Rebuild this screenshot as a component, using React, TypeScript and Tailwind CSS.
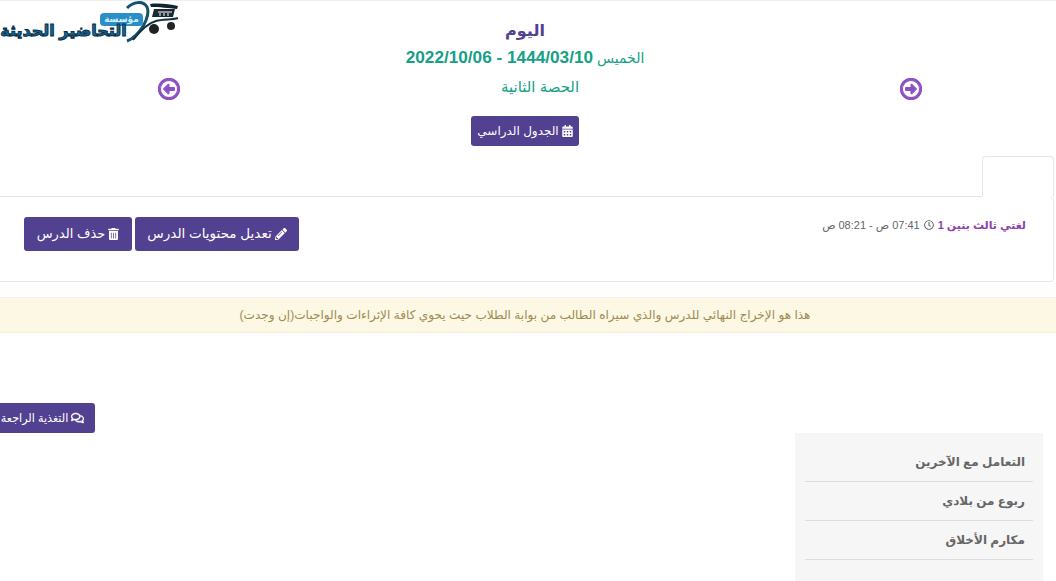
import {
  FaCalendarAlt,
  FaPencilAlt,
  FaRegArrowAltCircleLeft,
  FaRegArrowAltCircleRight,
  FaRegClock,
  FaRegComments,
  FaTrashAlt,
} from 'react-icons/fa'

const lessons = ['التعامل مع الآخرين', 'ربوع من بلادي', 'مكارم الأخلاق']

function Logo() {
  return (
    <div dir="rtl" className="absolute left-0 top-0 h-[42px] w-[180px] overflow-hidden">
      <svg viewBox="0 0 180 42" className="absolute left-0 top-0 h-[42px] w-[180px]">
        <path d="M127 7 C133 1 143 -1 147 6 C150 13 145 25 136 34 C133 37 130 39 127 40" fill="none" stroke="#14506f" strokeWidth="3" />
        <path d="M133 39 C140 30 148 22 156 20 C164 18 172 19 178 17" fill="none" stroke="#12303f" strokeWidth="2" />
        <path d="M150 3 C158 2 170 3 178 5 L177 8 C170 7 158 6 151 6 Z" fill="#10242f" />
        <path d="M154 8 H175 L173 16 H152 Z" fill="#1a2a33" />
        <path d="M158 11 H172 M160 12 V15 M164 12 V15 M168 12 V15" stroke="#ffffff" strokeWidth="1" />
        <circle cx="154" cy="28" r="5" fill="#222222" />
        <circle cx="171" cy="25" r="4" fill="#222222" />
      </svg>
      <span className="absolute left-[100px] top-[12px] flex h-[13px] w-[43px] items-center justify-center rounded-[4px] bg-[#2a8ec9] text-[9px] font-bold leading-none text-[#d7eefa]">
        مؤسسة
      </span>
      <span className="absolute left-0 top-[20px] w-[127px] whitespace-nowrap text-center text-[16px] font-bold leading-[20px] text-[#0f6a9c] [-webkit-text-stroke:1px_#0b2f45]">
        التحاضير الحديثة
      </span>
    </div>
  )
}

export default function App() {
  return (
    <div
      dir="rtl"
      className="relative h-[581px] w-[1056px] overflow-hidden border-t border-[#eeeeee] bg-white font-['Liberation_Sans','DejaVu_Sans',sans-serif] text-[#555555]"
    >
      <Logo />

      <header className="mr-[6px] flex flex-col items-center pt-[20px]">
        <h1 className="text-[16px] font-bold leading-[20px] text-[#524090]">اليوم</h1>
        <p className="mt-[6px] text-[14px] leading-[20px] text-[#16a085]">
          الخميس <b className="text-[17.2px]">1444/03/10 - 2022/10/06</b>
        </p>
      </header>

      <div className="ml-[158px] mr-[134px] mt-[9px] flex items-start justify-between">
        <FaRegArrowAltCircleRight stroke="currentColor" strokeWidth={24} className="mt-[1px] h-[22px] w-[22px] text-[#8e50c4]" />
        <span className="text-[15px] leading-[20px] text-[#16a085]">الحصة الثانية</span>
        <FaRegArrowAltCircleLeft stroke="currentColor" strokeWidth={24} className="mt-[1px] h-[22px] w-[22px] text-[#8e50c4]" />
      </div>

      <div className="mr-[6px] mt-[16px] flex justify-center">
        <button className="flex h-[30px] w-[108px] items-center justify-center gap-[3px] rounded-[3px] bg-[#524090] text-[12px] text-white">
          <FaCalendarAlt className="h-[12px] w-[11px]" />
          الجدول الدراسي
        </button>
      </div>

      <section className="ml-[-10px] mr-[2px] mt-[10px]">
        <div className="relative z-10 mb-[-1px] h-[41px] w-[72px] rounded-t-[4px] border border-b-white border-[#e5e5e5] bg-white" />
        <div className="flex h-[86px] items-start justify-between rounded-[4px] border border-[#e5e5e5] pl-[33px] pr-[27px] pt-[20px]">
          <div className="flex items-center gap-[4px] text-[11px] leading-[16px] text-[#666666]">
            <span className="text-[11px] font-bold text-[#8e44ad]">لغتي ثالث بنين 1</span>
            <FaRegClock className="h-[10px] w-[10px]" />
            <span>07:41 ص - 08:21 ص</span>
          </div>
          <div className="flex gap-[3px]">
            <button className="flex h-[34px] w-[164px] items-center justify-center gap-[3px] rounded-[3px] bg-[#524090] text-[13.5px] text-white">
              <FaPencilAlt className="h-[12px] w-[12px]" />
              تعديل محتويات الدرس
            </button>
            <button className="flex h-[34px] w-[108px] items-center justify-center gap-[3px] rounded-[3px] bg-[#524090] text-[13px] text-white">
              <FaTrashAlt className="h-[12px] w-[11px]" />
              حذف الدرس
            </button>
          </div>
        </div>
      </section>

      <div className="mt-[15px] flex h-[36px] items-center justify-center border-y border-[#faf0dc] bg-[#fcf8e3] pr-[6px] text-[12.1px] text-[#a08a55]">
        هذا هو الإخراج النهائي للدرس والذي سيراه الطالب من بوابة الطلاب حيث يحوي كافة الإثراءات والواجبات(إن وجدت)
      </div>

      <div className="mt-[70px] flex justify-end">
        <button className="ml-[-10px] flex h-[30px] w-[105px] items-center justify-center gap-[3px] rounded-[3px] bg-[#524090] text-[11.2px] text-white">
          <FaRegComments stroke="currentColor" strokeWidth={20} className="h-[12px] w-[13px]" />
          التغذية الراجعة
        </button>
      </div>

      <aside className="mr-[13px] w-[248px] bg-[#f6f6f6] px-[10px] pt-[10px]">
        <ul>
          {lessons.map((lesson) => (
            <li
              key={lesson}
              className="flex h-[39px] items-center border-b border-[#dddddd] pr-[8px] text-[12px] font-bold text-[#666666]"
            >
              {lesson}
            </li>
          ))}
        </ul>
        <div className="h-[40px]" />
      </aside>
    </div>
  )
}
